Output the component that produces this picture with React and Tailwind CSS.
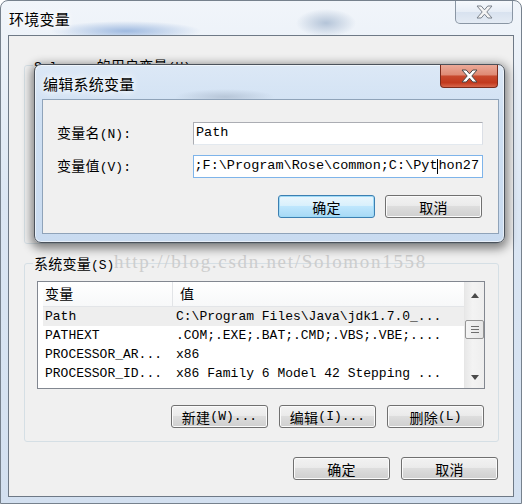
import React from 'react';

const Zh = ({ children, className = '' }) => (
  <span className={`font-['Noto_Sans_CJK_SC',sans-serif] tracking-[0.25px] ${className || 'text-[14px]'}`}>{children}</span>
);

const CloseX = ({ fill, stroke }) => (
  <svg width="17" height="14" viewBox="0 0 17 14">
    <path
      d="M1 1h4.2l3.3 3.8L11.8 1H16l-5.2 6L16 13h-4.2l-3.3-3.8L5.2 13H1l5.2-6z"
      fill={fill}
      stroke={stroke}
      strokeWidth="1"
      strokeLinejoin="round"
    />
  </svg>
);

const Btn = ({ children, focus = false }) => (
  <div
    className={`flex h-[23px] w-[97px] items-center justify-center rounded-[3px] border leading-[16px] ${
      focus
        ? 'border-[#3c7fb1] bg-[linear-gradient(#eaf6fd,#d9f0fc_45%,#bee6fd_50%,#a7d9f5)] shadow-[inset_0_0_0_1px_#9fdaf7]'
        : 'border-[#707070] bg-[linear-gradient(#f2f2f2,#ebebeb_45%,#dddddd_50%,#cfcfcf)] shadow-[inset_0_0_0_1px_#fbfbfb]'
    }`}
  >
    {children}
  </div>
);

const rows = [
  ['Path', 'C:\\Program Files\\Java\\jdk1.7.0_...', true],
  ['PATHEXT', '.COM;.EXE;.BAT;.CMD;.VBS;.VBE;....'],
  ['PROCESSOR_AR...', 'x86'],
  ['PROCESSOR_ID...', 'x86 Family 6 Model 42 Stepping ...'],
];

export default function App() {
  return (
    <div className="relative h-[504px] w-[522px] overflow-hidden rounded-t-[8px] border border-[#76818d] bg-[radial-gradient(ellipse_75px_10px_at_125px_30px,#9fbae0,transparent),radial-gradient(ellipse_30px_14px_at_325px_22px,#b4c4d8,transparent),linear-gradient(180deg,#f1f5fa,#dbe6f3_40%,#d3e0f0)] font-['Liberation_Mono','Noto_Sans_CJK_SC',monospace] text-[13px] text-black">
      {/* title bar */}
      <div className="flex h-[34px] items-start justify-between">
        <div className="pl-[8px] pt-[8px] leading-[20px] [text-shadow:0_0_6px_#fff,0_0_10px_#fff]">
          <Zh className="text-[15px]">环境变量</Zh>
        </div>
        <div className="mr-[8px] flex h-[23px] w-[58px] items-center justify-center rounded-b-[5px] border border-t-0 border-[#8a96a4] bg-[linear-gradient(#f6f9fc,#e6edf6_50%,#d8e2ef_50%,#e4ebf4)]">
          <CloseX fill="#f4f4f4" stroke="#7a828c" />
        </div>
      </div>

      {/* client area */}
      <div className="ml-[7px] h-[462px] w-[506px] border border-[#6e7986] bg-[#f0f0f0]">
        {/* user variables (behind dialog) */}
        <div className="ml-[15px] mt-[29px] h-[179px] w-[475px] rounded-[3px] border border-[#d5dfe5]">
          <div className="-mt-[9px] ml-[8px] w-fit bg-[#f0f0f0] px-[1px] leading-[16px]">
            Solomon <Zh>的用户变量</Zh>(U)
          </div>
        </div>

        {/* system variables */}
        <div className="ml-[15px] mt-[19px] h-[179px] w-[475px] rounded-[3px] border border-[#d5dfe5]">
          <div className="-mt-[9px] ml-[8px] w-fit bg-[#f0f0f0] px-[1px] leading-[16px]">
            <Zh>系统变量</Zh>(S)
          </div>

          <div className="ml-[12px] mt-[7px] flex h-[108px] w-[448px] border border-[#828790] bg-white">
            <div className="flex-1 pl-[5px]">
              <div className="flex h-[25px] items-center border-b border-[#e3e5e8] bg-[linear-gradient(#ffffff,#f7f8f9)]">
                <div className="w-[129px] pl-[2px] leading-[16px]"><Zh>变量</Zh></div>
                <div className="h-full w-px bg-[#e2e4e7]" />
                <div className="pl-[7px] leading-[16px]"><Zh>值</Zh></div>
              </div>
              {rows.map(([name, value, sel]) => (
                <div key={name} className={`flex h-[19px] items-center whitespace-nowrap ${sel ? 'bg-[#eeeeee]' : ''}`}>
                  <div className="w-[133px] pl-[2px]">{name}</div>
                  <div>{value}</div>
                </div>
              ))}
            </div>
            {/* scrollbar */}
            <div className="flex w-[20px] flex-col items-center border-l border-[#e6e6e6] bg-[linear-gradient(90deg,#e8e8e8,#f3f3f3_40%,#eeeeee)]">
              <div className="flex h-[24px] items-center justify-center pt-[2px]">
                <svg width="8" height="5" viewBox="0 0 8 5"><polygon points="0,5 4,0 8,5" fill="#4a4a4a" /></svg>
              </div>
              <div className="mt-[14px] flex h-[19px] w-[19px] flex-col items-center justify-center gap-[2px] rounded-[2px] border border-[#959595] bg-[linear-gradient(90deg,#f4f4f4,#e6e6e6)]">
                <div className="h-px w-[8px] bg-[#6e6e6e]" />
                <div className="h-px w-[8px] bg-[#6e6e6e]" />
                <div className="h-px w-[8px] bg-[#6e6e6e]" />
              </div>
              <div className="flex flex-1 items-end justify-center pb-[8px]">
                <svg width="8" height="5" viewBox="0 0 8 5"><polygon points="0,0 8,0 4,5" fill="#4a4a4a" /></svg>
              </div>
            </div>
          </div>

          <div className="mt-[16px] flex justify-end gap-[11px] pr-[14px]">
            <Btn><Zh>新建</Zh>(W)...</Btn>
            <Btn><Zh>编辑</Zh>(I)...</Btn>
            <Btn><Zh>删除</Zh>(L)</Btn>
          </div>
        </div>

        <div className="mt-[15px] flex justify-end gap-[11px] pr-[15px]">
          <Btn><Zh>确定</Zh></Btn>
          <Btn><Zh>取消</Zh></Btn>
        </div>
      </div>

      {/* watermark */}
      <div className="pointer-events-none absolute left-[113px] top-[251px] font-['Liberation_Serif',serif] text-[19px] leading-[19px] tracking-[1.7px] text-[#cdcdcd]">
        http://blog.csdn.net/Solomon1558
      </div>

      {/* edit dialog */}
      <div className="absolute left-[33px] top-[63px] h-[179px] w-[471px] rounded-[7px] border border-[#4b525b] bg-[radial-gradient(ellipse_50px_8px_at_190px_32px,#b7c6d8,transparent),linear-gradient(180deg,#dce8f6,#cfe0f3_30%,#c9dbf0)] shadow-[0_3px_10px_3px_rgba(0,0,0,0.45),inset_0_0_0_1px_rgba(255,255,255,0.55)]">
        <div className="flex h-[34px] items-start justify-between">
          <div className="pl-[8px] pt-[10px] leading-[18px] [text-shadow:0_0_6px_#fff,0_0_10px_#fff]">
            <Zh className="text-[15px]">编辑系统变量</Zh>
          </div>
          <div className="mr-[6px] flex h-[23px] w-[58px] items-center justify-center rounded-b-[4px] border border-t-0 border-[#7b2b1c] bg-[linear-gradient(#eba998,#df8a74_45%,#c84a2e_50%,#c2391d_80%,#d7664b)]">
            <CloseX fill="#ffffff" stroke="#4a4a4a" />
          </div>
        </div>
        <div className="ml-[7px] h-[135px] w-[457px] border border-[#8fa3b9] bg-[#f0f0f0] pl-[14px] pr-[15px] pt-[22px]">
          <div className="flex items-center">
            <div className="w-[136px] leading-[16px]"><Zh>变量名</Zh>(N):</div>
            <div className="flex h-[23px] w-[290px] items-center border border-[#abadb3] border-r-[#dbdfe6] border-b-[#e3e9ef] bg-white pl-[2px] text-[13.5px]">
              Path
            </div>
          </div>
          <div className="mt-[10px] flex items-center">
            <div className="w-[136px] leading-[16px]"><Zh>变量值</Zh>(V):</div>
            <div className="flex h-[23px] w-[290px] items-center justify-end overflow-hidden whitespace-nowrap border border-[#7eb4ea] bg-white pr-[3px] text-[13.5px]">
              <span>jdk1.7.0_45;F:\Program\Rose\common;C:\Pyt</span>
              <span className="inline-block h-[15px] w-0 border-l border-black" />
              <span>hon27</span>
            </div>
          </div>
          <div className="mt-[17px] flex justify-end gap-[10px] pr-[1px]">
            <Btn focus><Zh>确定</Zh></Btn>
            <Btn><Zh>取消</Zh></Btn>
          </div>
        </div>
      </div>
    </div>
  );
}
